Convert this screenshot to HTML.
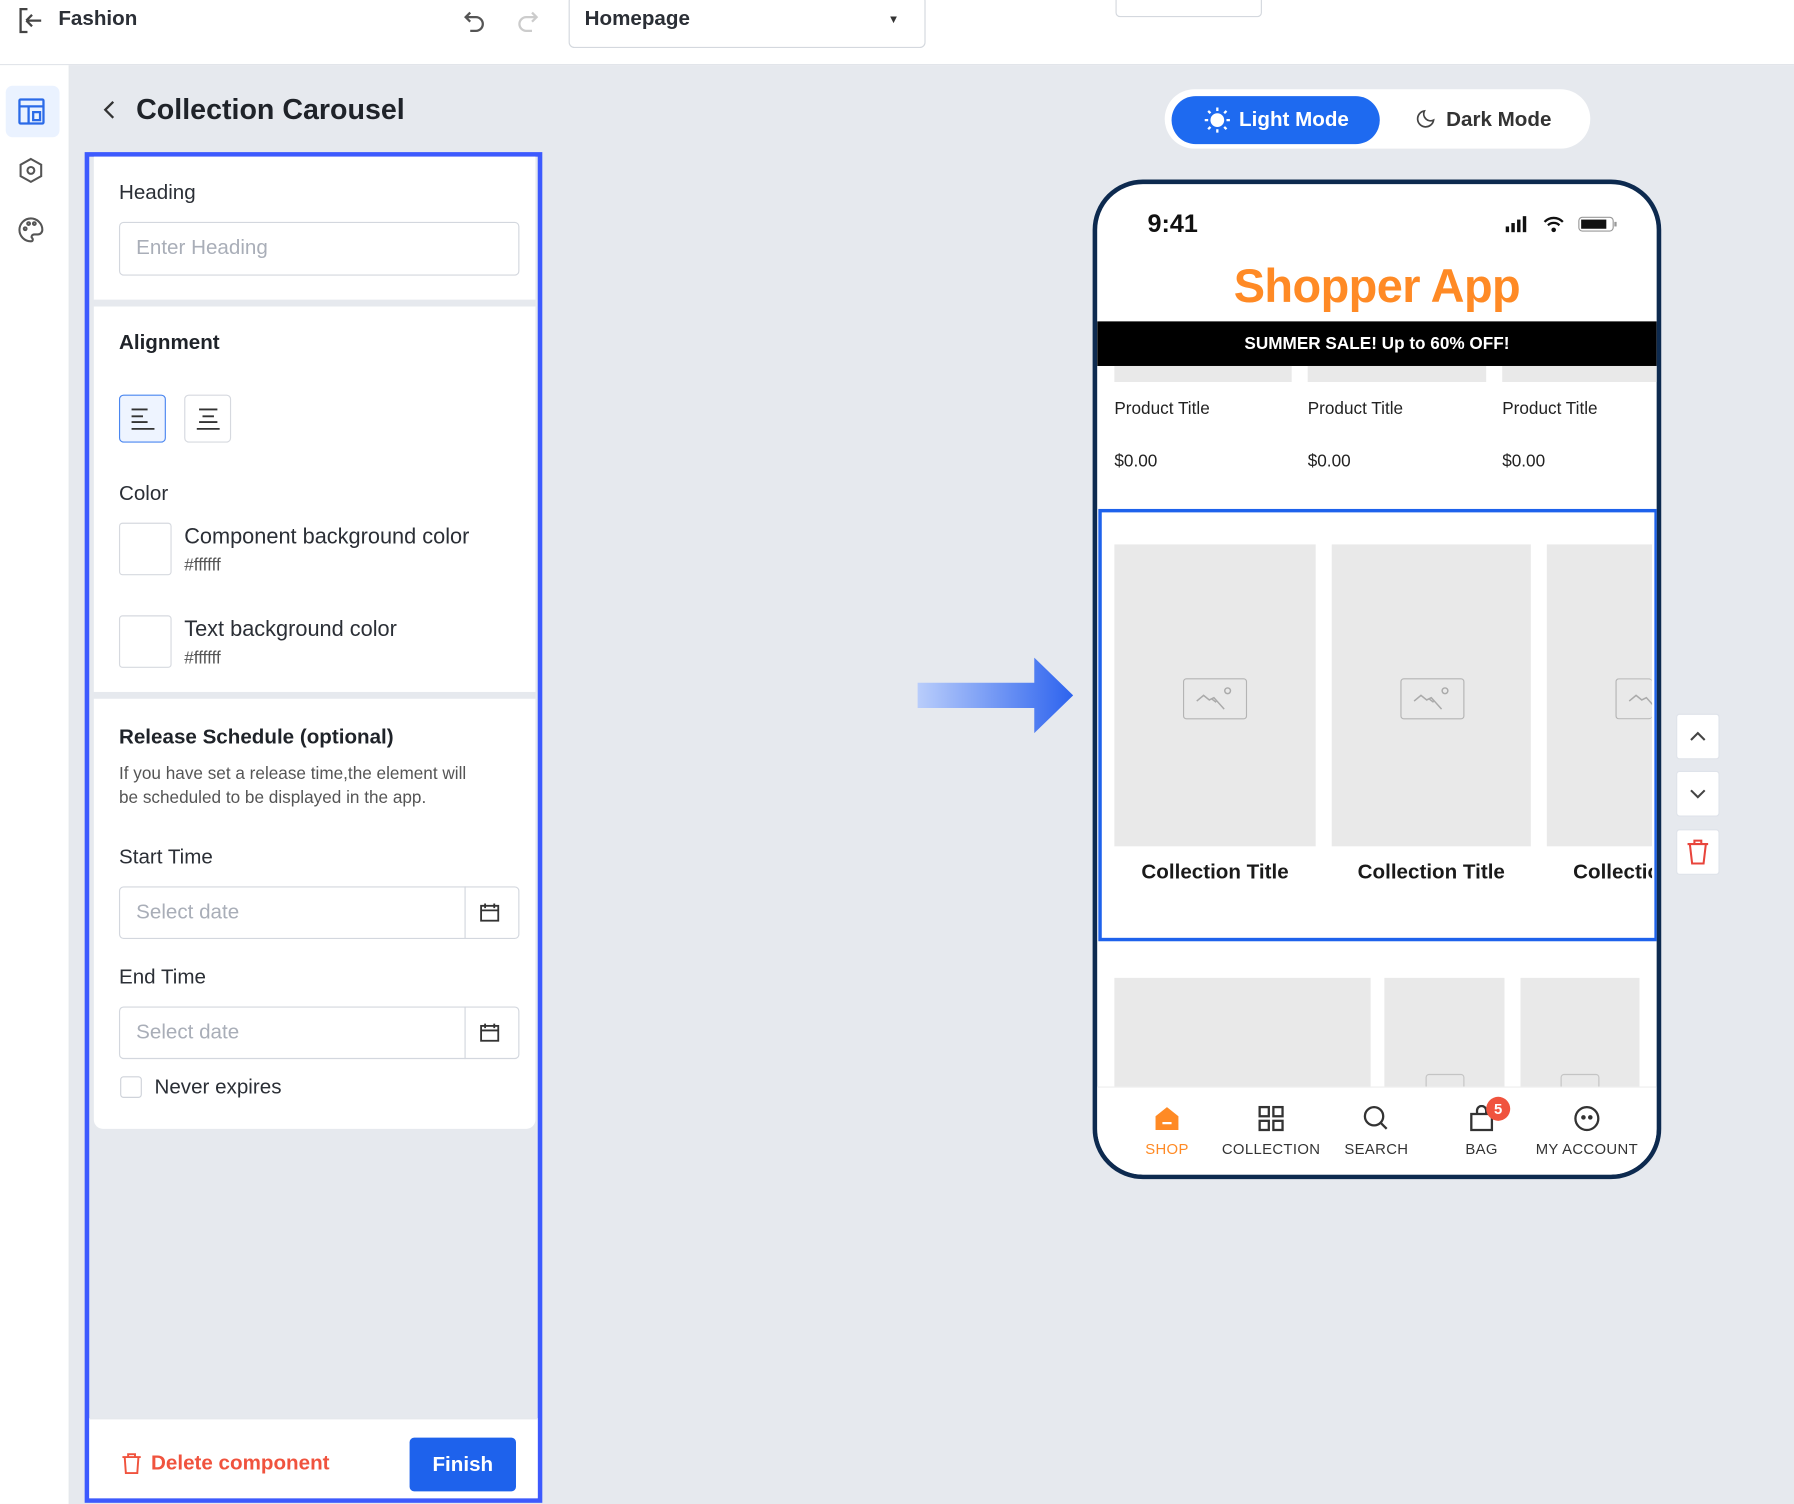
<!DOCTYPE html>
<html><head><meta charset="utf-8"><style>
*{box-sizing:border-box;margin:0;padding:0}
html,body{width:1794px;height:1504px;overflow:hidden;background:#e6e9ee;font-family:"Liberation Sans","Noto Sans CJK SC",sans-serif}
#w{position:absolute;left:0;top:0;width:1568px;height:1315px;transform:scale(1.1441,1.1437);transform-origin:0 0;background:#e6e9ee}
.a{position:absolute}
.t{position:absolute;white-space:nowrap}
.sec{position:absolute;left:82px;width:386px;background:#fff}
.lbl{font-size:18px;color:#2b2f36}
.inp{position:absolute;border:1px solid #d3d7de;border-radius:4px;background:#fff}
.ph{color:#a9aeb8;font-size:18px}
.sw{position:absolute;width:46px;height:46px;border:1px solid #d6d9df;border-radius:3px}
.tab{position:absolute;top:960px;width:100px;text-align:center;font-size:13px;color:#333;letter-spacing:.3px}
.cimg{position:absolute;background:#e9e9e9}
.pic{position:absolute;width:56px;height:36px;border:1.5px solid #b4b4b4;border-radius:3px;overflow:hidden}
.sb{position:absolute;left:1465px;width:38px;height:40px;background:#fff;border:1px solid #dfe3ea;border-radius:3px}
</style></head><body><div id="w">
<div class="a" style="left:0;top:0;width:1568px;height:57px;background:#fff;border-bottom:1px solid #e1e4e9"></div>
<svg class="a" style="left:14px;top:5px" width="26" height="26" viewBox="0 0 26 26" fill="none" stroke="#444" stroke-width="2"><path d="M10 3H4v20h6M9 13h13M9 13l5-5M9 13l5 5"/></svg>
<div class="t" style="left:51px;top:6px;font-size:18px;font-weight:bold;color:#2b2f36">Fashion</div>
<svg class="a" style="left:403px;top:6px" width="24" height="24" viewBox="0 0 24 24" fill="none" stroke="#555" stroke-width="2"><path d="M8 5L4 9l4 4M4 9h9a6 6 0 010 12H8"/></svg>
<svg class="a" style="left:449px;top:6px" width="24" height="24" viewBox="0 0 24 24" fill="none" stroke="#ccc" stroke-width="2"><path d="M16 5l4 4-4 4M20 9h-9a6 6 0 000 12h5"/></svg>
<div class="a" style="left:497px;top:-4px;width:312px;height:46px;border:1px solid #d4d8de;border-radius:5px;background:#fff"></div>
<div class="t" style="left:511px;top:6px;font-size:18px;color:#2b2f36;font-weight:bold">Homepage</div>
<div class="t" style="left:776px;top:12px;font-size:10px;color:#333">▼</div>
<div class="a" style="left:975px;top:-6px;width:128px;height:21px;border:1px solid #d4d8de;border-radius:4px;background:#fff"></div>
<div class="a" style="left:0;top:57px;width:61px;height:1258px;background:#fff;border-right:1px solid #e1e4e9"></div>
<div class="a" style="left:5px;top:75px;width:47px;height:45px;background:#eaf2ff;border-radius:6px"></div>
<svg class="a" style="left:15px;top:85px" width="25" height="25" viewBox="0 0 25 25" fill="none" stroke="#2a6ae8" stroke-width="2"><rect x="2" y="2" width="21" height="21" rx="1"/><path d="M2 8h21M10 8v15M14 13h6v7h-6z"/></svg>
<svg class="a" style="left:15px;top:137px" width="24" height="24" viewBox="0 0 24 24" fill="none" stroke="#555" stroke-width="1.8"><path d="M12 2l9 5v10l-9 5-9-5V7z"/><circle cx="12" cy="12" r="3"/></svg>
<svg class="a" style="left:15px;top:189px" width="24" height="24" viewBox="0 0 24 24" fill="none" stroke="#555" stroke-width="1.8"><path d="M12 2a10 10 0 100 20c2 0 2-2 1-3s0-3 2-3h3a4 4 0 004-4C22 6 17 2 12 2z"/><circle cx="7" cy="11" r="1.2"/><circle cx="10" cy="6.5" r="1.2"/><circle cx="15" cy="6.5" r="1.2"/></svg>
<svg class="a" style="left:88px;top:86px" width="16" height="20" viewBox="0 0 16 20" fill="none" stroke="#333" stroke-width="2"><path d="M11 3L4 10l7 7"/></svg>
<div class="t" style="left:119px;top:82px;font-size:25px;font-weight:bold;color:#1f2329">Collection Carousel</div>
<div class="a" style="left:74px;top:133px;width:400px;height:1181px;border:4px solid #3d5afe;background:#e6e9ee"></div>
<div class="sec" style="top:137px;height:125px"></div>
<div class="t lbl" style="left:104px;top:158px">Heading</div>
<div class="inp" style="left:104px;top:194px;width:350px;height:47px"></div>
<div class="t ph" style="left:119px;top:206px">Enter Heading</div>
<div class="sec" style="top:268px;height:337px"></div>
<div class="t lbl" style="left:104px;top:289px;font-weight:bold;color:#1f2329">Alignment</div>
<div class="a" style="left:104px;top:345px;width:41px;height:42px;border:1.5px solid #4a86f0;background:#eef4ff;border-radius:4px"></div>
<svg class="a" style="left:114px;top:355px" width="22" height="22" viewBox="0 0 22 22" stroke="#333" stroke-width="1.6"><path d="M1 3h14M1 9h10M1 14h14M1 20h20"/></svg>
<div class="a" style="left:161px;top:345px;width:41px;height:42px;border:1px solid #d6d9df;border-radius:4px"></div>
<svg class="a" style="left:171px;top:355px" width="22" height="22" viewBox="0 0 22 22" stroke="#333" stroke-width="1.6"><path d="M3 3h16M6 9h10M3 14h16M1 20h20"/></svg>
<div class="t lbl" style="left:104px;top:421px">Color</div>
<div class="sw" style="left:104px;top:457px"></div>
<div class="t lbl" style="left:161px;top:459px;font-size:19px">Component background color</div>
<div class="t" style="left:161px;top:486px;font-size:15px;color:#555">#ffffff</div>
<div class="sw" style="left:104px;top:538px"></div>
<div class="t lbl" style="left:161px;top:540px;font-size:19px">Text background color</div>
<div class="t" style="left:161px;top:567px;font-size:15px;color:#555">#ffffff</div>
<div class="sec" style="top:611px;height:376px;border-radius:0 0 8px 8px"></div>
<div class="t lbl" style="left:104px;top:634px;font-weight:bold;color:#1f2329">Release Schedule (optional)</div>
<div class="t" style="left:104px;top:666px;font-size:15px;color:#555;line-height:21px">If you have set a release time,the element will<br>be scheduled to be displayed in the app.</div>
<div class="t lbl" style="left:104px;top:739px">Start Time</div>
<div class="inp" style="left:104px;top:775px;width:350px;height:46px"></div>
<div class="a" style="left:406px;top:775px;width:1px;height:46px;background:#d3d7de"></div>
<div class="t ph" style="left:119px;top:787px">Select date</div>
<svg class="a" style="left:419px;top:789px" width="18" height="18" viewBox="0 0 18 18" fill="none" stroke="#333" stroke-width="1.6"><rect x="1.5" y="3" width="15" height="13"/><path d="M1.5 7h15M5 1v4M13 1v4"/></svg>
<div class="t lbl" style="left:104px;top:844px">End Time</div>
<div class="inp" style="left:104px;top:880px;width:350px;height:46px"></div>
<div class="a" style="left:406px;top:880px;width:1px;height:46px;background:#d3d7de"></div>
<div class="t ph" style="left:119px;top:892px">Select date</div>
<svg class="a" style="left:419px;top:894px" width="18" height="18" viewBox="0 0 18 18" fill="none" stroke="#333" stroke-width="1.6"><rect x="1.5" y="3" width="15" height="13"/><path d="M1.5 7h15M5 1v4M13 1v4"/></svg>
<div class="a" style="left:105px;top:941px;width:19px;height:19px;border:1px solid #cfd3da;border-radius:3px"></div>
<div class="t lbl" style="left:135px;top:940px">Never expires</div>
<div class="a" style="left:78px;top:1240px;width:392px;height:70px;background:#fff;border-top:1px solid #e1e4e9"></div>
<svg class="a" style="left:106px;top:1270px" width="18" height="20" viewBox="0 0 18 20" fill="none" stroke="#f0533e" stroke-width="1.7"><path d="M1 4h16M6 4V1.5h6V4M3 4l1 14h10l1-14"/></svg>
<div class="t" style="left:132px;top:1269px;font-size:18px;font-weight:bold;color:#f0533e">Delete component</div>
<div class="a" style="left:358px;top:1257px;width:93px;height:47px;background:#1e62ec;border-radius:4px;color:#fff;font-size:18px;font-weight:bold;text-align:center;line-height:47px">Finish</div>
<div class="a" style="left:1018px;top:78px;width:372px;height:52px;background:#fff;border-radius:26px"></div>
<div class="a" style="left:1024px;top:84px;width:182px;height:42px;background:#1e6af0;border-radius:21px"></div>
<svg class="a" style="left:1052px;top:93px" width="24" height="24" viewBox="0 0 24 24" stroke="#fff" stroke-width="2" fill="#fff"><circle cx="12" cy="12" r="5"/><path d="M12 1v3M12 20v3M1 12h3M20 12h3M4 4l2 2M18 18l2 2M4 20l2-2M18 6l2-2"/></svg>
<div class="t" style="left:1083px;top:94px;font-size:18px;font-weight:bold;color:#fff">Light Mode</div>
<svg class="a" style="left:1237px;top:95px" width="18" height="18" viewBox="0 0 18 18" fill="none" stroke="#444" stroke-width="1.5"><path d="M8 2a7 7 0 108 8A6 6 0 018 2z"/></svg>
<div class="t" style="left:1264px;top:94px;font-size:18px;font-weight:bold;color:#333">Dark Mode</div>
<svg class="a" style="left:802px;top:575px" width="136" height="66" viewBox="0 0 136 66"><defs><linearGradient id="g" x1="0" x2="1"><stop offset="0" stop-color="#b9cdfb"/><stop offset="1" stop-color="#2d63ee"/></linearGradient></defs><path d="M0 22h102V0l34 33-34 33V44H0z" fill="url(#g)"/></svg>
<div class="a" style="left:955px;top:157px;width:497px;height:874px;border:4px solid #0d2a4f;border-radius:44px;background:#fff;overflow:hidden">
 <div class="t" style="left:44px;top:22px;font-size:22px;font-weight:bold;color:#111">9:41</div>
 <svg class="a" style="left:357px;top:27px" width="102" height="16" viewBox="0 0 102 16"><rect x="0" y="10" width="3" height="5" fill="#111"/><rect x="5" y="7" width="3" height="8" fill="#111"/><rect x="10" y="4" width="3" height="11" fill="#111"/><rect x="15" y="1" width="3" height="14" fill="#111"/><path d="M34 6a11 11 0 0116 0M37 9a7 7 0 0110 0" stroke="#111" stroke-width="2" fill="none"/><circle cx="42" cy="13" r="2" fill="#111"/><rect x="64" y="2" width="30" height="12" rx="3" fill="none" stroke="#999"/><rect x="66" y="4" width="22" height="8" fill="#111"/><rect x="95" y="6" width="2" height="4" fill="#999"/></svg>
 <div class="t" style="left:0;width:489px;text-align:center;top:66px;font-size:41px;font-weight:bold;color:#ff8a25;letter-spacing:-0.5px">Shopper App</div>
 <div class="a" style="left:0;top:120px;width:489px;height:39px;background:#000;color:#fff;font-size:15px;font-weight:bold;text-align:center;line-height:39px">SUMMER SALE! Up to 60% OFF!</div>
 <div class="cimg" style="left:15px;top:159px;width:155px;height:14px"></div>
 <div class="cimg" style="left:184px;top:159px;width:156px;height:14px"></div>
 <div class="cimg" style="left:354px;top:159px;width:140px;height:14px"></div>
 <div class="t" style="left:15px;top:188px;font-size:15px;color:#222">Product Title</div>
 <div class="t" style="left:184px;top:188px;font-size:15px;color:#222">Product Title</div>
 <div class="t" style="left:354px;top:188px;font-size:15px;color:#222">Product Title</div>
 <div class="t" style="left:15px;top:234px;font-size:15px;color:#222">$0.00</div>
 <div class="t" style="left:184px;top:234px;font-size:15px;color:#222">$0.00</div>
 <div class="t" style="left:354px;top:234px;font-size:15px;color:#222">$0.00</div>
 <div class="a" style="left:1px;top:284px;width:489px;height:378px;border:3px solid #1e62ec"></div>
 <div class="cimg" style="left:15px;top:315px;width:176px;height:264px"></div>
 <div class="cimg" style="left:205px;top:315px;width:174px;height:264px"></div>
 <div class="cimg" style="left:393px;top:315px;width:92px;height:264px"></div>
 <div class="pic" style="left:75px;top:432px"><svg width="56" height="36" viewBox="0 0 56 36" fill="none" stroke="#aaa" stroke-width="1.3"><path d="M11 19l6-5 5 4 4-2 9 10M24 17l4 3"/><circle cx="38" cy="10" r="2.5"/></svg></div>
 <div class="pic" style="left:265px;top:432px"><svg width="56" height="36" viewBox="0 0 56 36" fill="none" stroke="#aaa" stroke-width="1.3"><path d="M11 19l6-5 5 4 4-2 9 10M24 17l4 3"/><circle cx="38" cy="10" r="2.5"/></svg></div>
 <div class="pic" style="left:453px;top:432px;border-right:none;width:32px"><svg width="56" height="36" viewBox="0 0 56 36" fill="none" stroke="#aaa" stroke-width="1.3"><path d="M11 19l6-5 5 4 4-2 9 10"/></svg></div>
 <div class="t" style="left:15px;width:176px;text-align:center;top:591px;font-size:18px;font-weight:bold;color:#1a1a1a">Collection Title</div>
 <div class="t" style="left:205px;width:174px;text-align:center;top:591px;font-size:18px;font-weight:bold;color:#1a1a1a">Collection Title</div>
 <div class="a" style="left:393px;top:591px;width:92px;overflow:hidden;font-size:18px;font-weight:bold;color:#1a1a1a;white-space:nowrap;padding-left:23px">Collection Title</div>
 <div class="cimg" style="left:15px;top:694px;width:224px;height:100px"></div>
 <div class="cimg" style="left:251px;top:694px;width:105px;height:100px"></div>
 <div class="cimg" style="left:370px;top:694px;width:104px;height:100px"></div>
 <div class="pic" style="left:287px;top:778px;width:34px;height:24px;border-color:#c4c4c4"></div>
 <div class="pic" style="left:405px;top:778px;width:34px;height:24px;border-color:#c4c4c4"></div>
 <div class="a" style="left:0;top:789px;width:489px;height:90px;background:#fff;border-top:1px solid #eee"></div>
 <svg class="a" style="left:49px;top:805px" width="24" height="24" viewBox="0 0 24 24"><path d="M12 2l10 8v12H2V10z" fill="#ff8a25"/><path d="M8 16h8" stroke="#fff" stroke-width="2"/></svg>
 <svg class="a" style="left:140px;top:805px" width="24" height="24" viewBox="0 0 24 24" fill="none" stroke="#333" stroke-width="2"><rect x="2" y="2" width="8" height="8"/><rect x="14" y="2" width="8" height="8"/><rect x="2" y="14" width="8" height="8"/><rect x="14" y="14" width="8" height="8"/></svg>
 <svg class="a" style="left:232px;top:805px" width="24" height="24" viewBox="0 0 24 24" fill="none" stroke="#333" stroke-width="2"><circle cx="10" cy="10" r="8"/><path d="M16 16l5 5"/></svg>
 <svg class="a" style="left:324px;top:805px" width="24" height="24" viewBox="0 0 24 24" fill="none" stroke="#333" stroke-width="2"><path d="M3 8h18v14H3zM8 8V5a4 4 0 018 0v3"/></svg>
 <div class="a" style="left:340px;top:798px;width:21px;height:21px;border-radius:50%;background:#f0533e;color:#fff;font-size:13px;font-weight:bold;text-align:center;line-height:21px">5</div>
 <svg class="a" style="left:416px;top:805px" width="24" height="24" viewBox="0 0 24 24" fill="none" stroke="#333" stroke-width="2"><circle cx="12" cy="12" r="10"/><circle cx="9" cy="11" r="1" fill="#333"/><circle cx="15" cy="11" r="1" fill="#333"/></svg>
 <div class="tab" style="left:11px;top:836px;color:#ff8a25">SHOP</div>
 <div class="tab" style="left:102px;top:836px">COLLECTION</div>
 <div class="tab" style="left:194px;top:836px">SEARCH</div>
 <div class="tab" style="left:286px;top:836px">BAG</div>
 <div class="tab" style="left:378px;top:836px">MY ACCOUNT</div>
</div>
<div class="sb" style="top:624px"></div>
<svg class="a" style="left:1476px;top:636px" width="16" height="16" viewBox="0 0 16 16" fill="none" stroke="#444" stroke-width="1.8"><path d="M2 11l6-6 6 6"/></svg>
<div class="sb" style="top:674px"></div>
<svg class="a" style="left:1476px;top:686px" width="16" height="16" viewBox="0 0 16 16" fill="none" stroke="#444" stroke-width="1.8"><path d="M2 5l6 6 6-6"/></svg>
<div class="sb" style="top:725px"></div>
<svg class="a" style="left:1474px;top:733px" width="20" height="24" viewBox="0 0 20 24" fill="none" stroke="#e8453c" stroke-width="1.8"><path d="M1 5h18M7 5V2h6v3M3 5l2 17h10l2-17"/></svg>
</div></body></html>
